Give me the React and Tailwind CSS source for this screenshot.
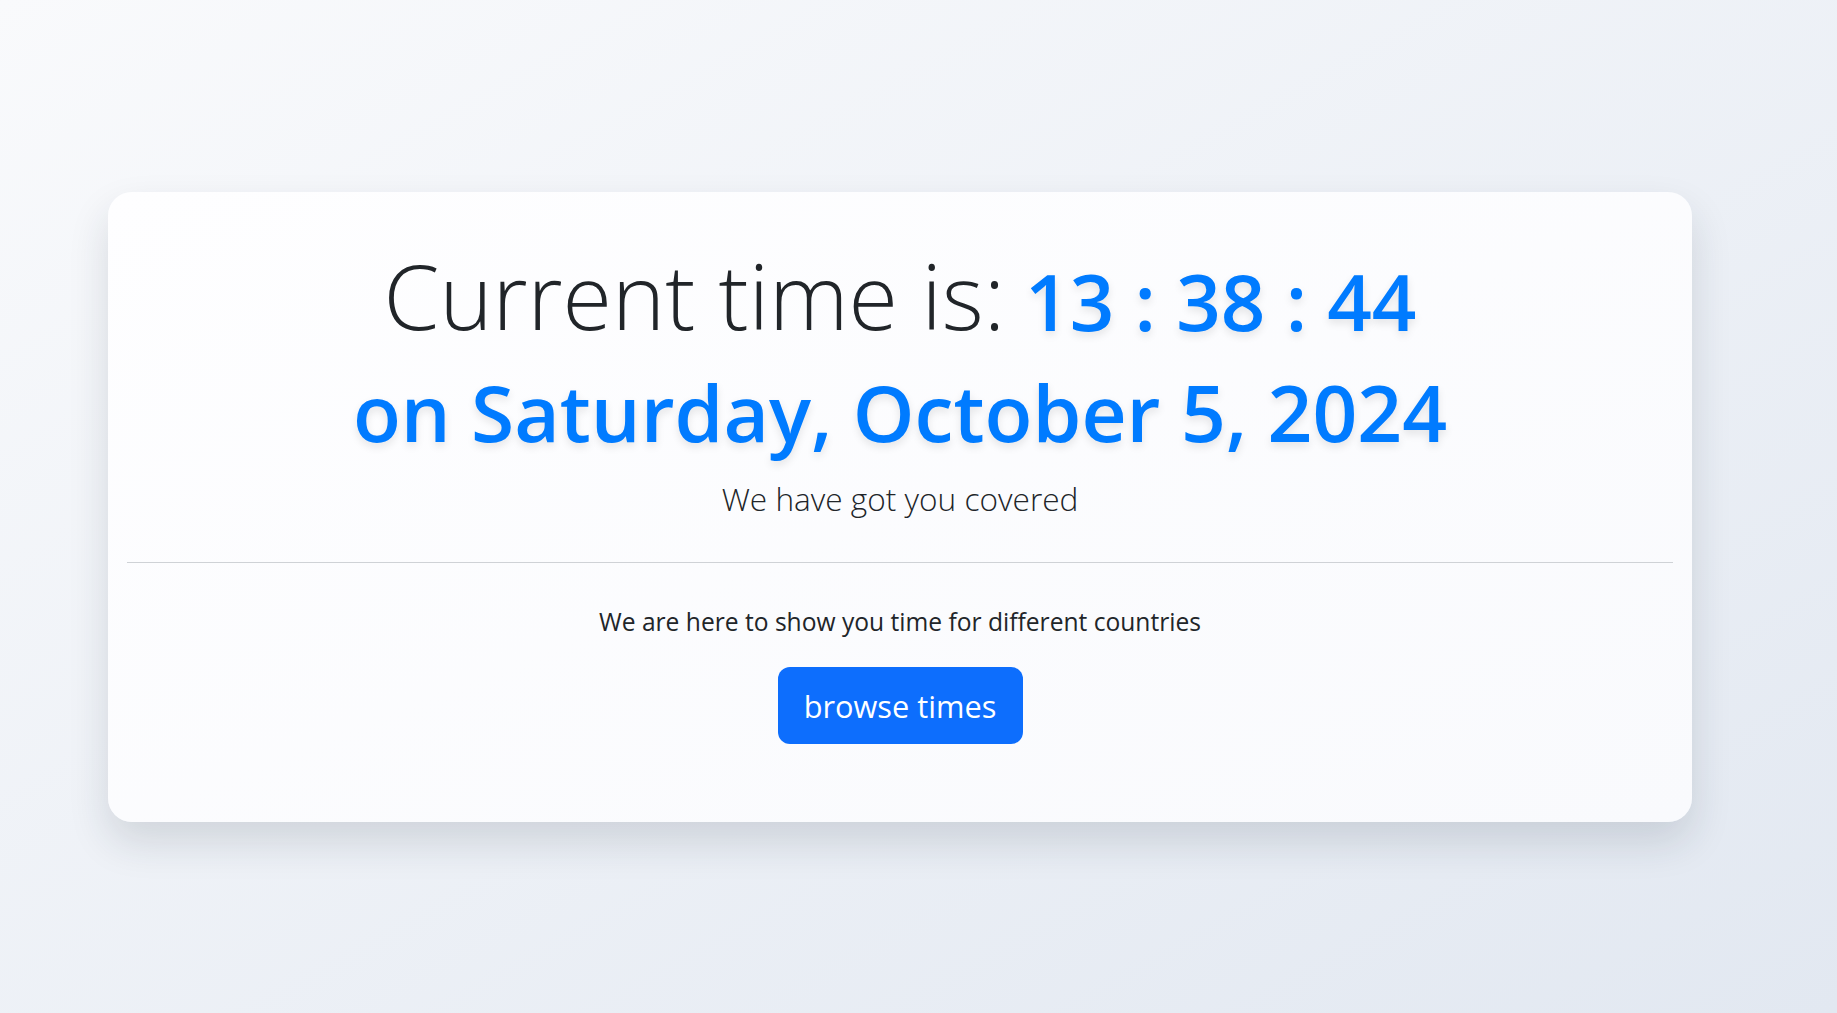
export default function App() {
  return (
    <div className="min-h-screen w-full flex items-center bg-gradient-to-br from-[#f9fafc] to-[#e2e8f1] pl-[108px] font-['Open_Sans',sans-serif]">
      <div className="w-[1584px] h-[630px] rounded-[24px] bg-gradient-to-br from-[#fefeff] to-[#f9fafd] shadow-[0_20px_40px_rgba(30,40,60,0.14)] px-[19px] flex flex-col items-center">
        <h1 className="mt-[38px] h-[110px] flex items-end leading-none text-[#212529] text-center whitespace-nowrap">
          <span className="text-[90px] font-light">Current time is:</span>
          <span className="ml-[20px] text-[78px] font-semibold text-[#007bff] [text-shadow:0_4px_8px_rgba(0,0,0,0.1)]">
            13 : 38 : 44
          </span>
        </h1>
        <div className="mt-[33px] text-[78.5px] leading-none font-semibold text-[#007bff] whitespace-nowrap [text-shadow:0_4px_8px_rgba(0,0,0,0.1)]">
          on Saturday, October 5, 2024
        </div>
        <p className="mt-[32px] text-[31.6px] font-light text-[#212529] leading-none">We have got you covered</p>
        <hr className="mt-[47px] w-full border-0 border-t border-[#cfd2d6]" />
        <p className="mt-[47px] text-[24.6px] text-[#212529] leading-none">We are here to show you time for different countries</p>
        <button className="mt-[33px] w-[245px] h-[77px] rounded-[12px] bg-[#0d6efd] text-white text-[30.75px]">
          browse times
        </button>
      </div>
    </div>
  )
}
